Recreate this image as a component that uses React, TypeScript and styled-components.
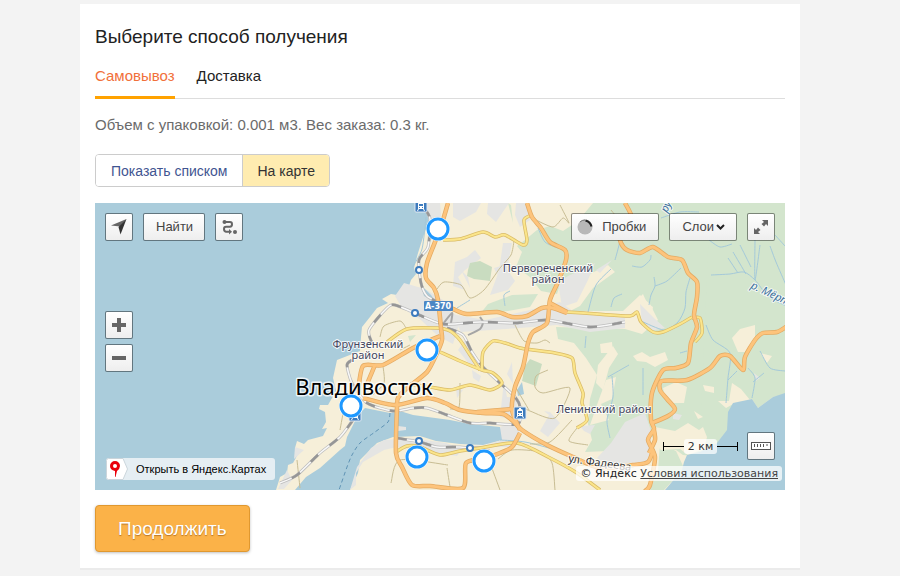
import React from "react";
import styled, { createGlobalStyle } from "styled-components";

const GlobalStyle = createGlobalStyle`
  *, *::before, *::after { box-sizing: border-box; }
  body {
    margin: 0;
    padding: 4px 20px 4px 0;
    background: #f3f3f3;
    color: #222;
    font-family: "Liberation Sans", Arial, sans-serif;
  }
`;

const Card = styled.main`
  max-width: 720px;
  margin: 0 auto;
  padding: 21px 15px 16px;
  background: #fff;
  box-shadow: 0 2px 0 #ebebeb;
`;

const Title = styled.h1`
  margin: 0 0 15px;
  font-size: 19px;
  line-height: 24px;
  font-weight: 400;
`;

const Tabs = styled.nav`
  display: flex;
  gap: 22px;
  border-bottom: 1px solid #ddd;
`;

const Tab = styled.button<{ $active?: boolean }>`
  height: 35px;
  margin-bottom: -1px;
  padding: 0 0 8px;
  border: 0;
  border-bottom: 3px solid ${(p) => (p.$active ? "#ffa200" : "transparent")};
  background: none;
  color: ${(p) => (p.$active ? "#f1703a" : "#222")};
  font: 15px/20px "Liberation Sans", Arial, sans-serif;
  cursor: pointer;
`;

const Summary = styled.p`
  margin: 16px 0 19px;
  color: #6b6b6b;
  font-size: 15px;
  line-height: 20px;
`;

const Segments = styled.div`
  display: inline-flex;
  height: 33px;
  border: 1px solid #ccc;
  border-radius: 4px;
  overflow: hidden;
`;

const Segment = styled.button<{ $active?: boolean }>`
  padding: 0 14px 0 15px;
  border: 0;
  background: ${(p) => (p.$active ? "#ffecb0" : "#fff")};
  color: ${(p) => (p.$active ? "#333" : "#3f5591")};
  font: 14px/20px "Liberation Sans", Arial, sans-serif;
  cursor: pointer;
  & + & { border-left: 1px solid #ccc; }
`;

const MapPanel = styled.section`
  display: grid;
  height: 287px;
  margin: 16px 0 15px;
  overflow: hidden;
  background: #aaccdb;
  & > * { grid-area: 1 / 1; min-width: 0; min-height: 0; }
`;

const MapCanvas = styled.svg`
  display: block;
  width: 100%;
  height: 287px;
`;

const Controls = styled.div`
  display: flex;
  flex-direction: column;
  justify-content: space-between;
  padding: 10px 10px 9px;
`;

const Row = styled.div`
  display: flex;
  justify-content: space-between;
  align-items: flex-end;
`;

const Group = styled.div<{ $gap?: number }>`
  display: flex;
  align-items: center;
  gap: ${(p) => p.$gap ?? 10}px;
`;

const ZoomGroup = styled.div`
  display: grid;
  gap: 5px;
  justify-content: start;
  margin-top: 10px;
`;

const MapButton = styled.button`
  display: flex;
  align-items: center;
  justify-content: center;
  gap: 2px;
  min-width: 28px;
  height: 28px;
  padding: 0;
  border: 1px solid rgba(0, 0, 0, 0.42);
  border-radius: 2px;
  background: linear-gradient(#fff, #eee);
  background-clip: padding-box;
  color: #444;
  font: 13px/20px "Liberation Sans", Arial, sans-serif;
  cursor: pointer;
  svg { flex: none; display: block; }
`;

const TextButton = styled(MapButton)`
  padding: 0 11px 0 12px;
`;

const TrafficButton = styled(MapButton)`
  gap: 9px;
  padding: 0 12px 0 5px;
`;

const OpenLink = styled.a`
  display: flex;
  align-items: center;
  gap: 8px;
  height: 22px;
  margin: 0 0 1px 1px;
  padding-right: 9px;
  border-radius: 3px;
  background: #e5eef3;
  color: #000;
  font-size: 11px;
  line-height: 16px;
  text-decoration: none;
`;

const BottomRight = styled.div`
  display: grid;
  justify-items: end;
  gap: 6px;
`;

const Copyright = styled.p`
  margin: 0 -7px 0 0;
  padding: 0 4px;
  border-radius: 3px;
  background: rgba(255, 255, 255, 0.72);
  color: #222;
  font: 11px/15px "DejaVu Sans", Verdana, sans-serif;
  a { color: #444; }
`;

const Scale = styled.div`
  display: flex;
  align-items: center;
  width: 75px;
  height: 9px;
  border: solid #000;
  border-width: 0 1px;
  color: #333;
  font: 11px/15px "DejaVu Sans", Verdana, sans-serif;
  white-space: nowrap;
  &::before, &::after { content: ""; flex: 1; height: 1px; background: #000; }
  span { padding: 0 4px; border-radius: 3px; background: rgba(255, 255, 255, 0.72); }
`;

const Submit = styled.button`
  display: block;
  height: 47px;
  padding: 0 22px;
  border: 1px solid #e0982f;
  border-radius: 4px;
  background: #fbb248;
  box-shadow: 0 1px 3px rgba(0, 0, 0, 0.25);
  color: #fff;
  font: 19px/24px "Liberation Sans", Arial, sans-serif;
  text-shadow: 0 1px 1px rgba(120, 60, 0, 0.5);
  cursor: pointer;
`;

type Line = number[];

/* Builds a smooth open curve through a flat list of x, y pairs. */
function curve(p: Line): string {
  const n = p.length / 2;
  const at = (i: number) => {
    const k = Math.max(0, Math.min(n - 1, i));
    return [p[k * 2], p[k * 2 + 1]];
  };
  let d = `M${p[0]} ${p[1]}`;
  for (let i = 0; i < n - 1; i++) {
    const [a, b, c, e] = [at(i - 1), at(i), at(i + 1), at(i + 2)];
    const t = 8;
    d += `C${b[0] + (c[0] - a[0]) / t} ${b[1] + (c[1] - a[1]) / t} ${c[0] - (e[0] - b[0]) / t} ${c[1] - (e[1] - b[1]) / t} ${c[0]} ${c[1]}`;
  }
  return d;
}

const highways: Line[] = [
  [448, 203, 443, 220, 435, 242, 427, 263, 426, 278, 434, 288, 438, 300, 441, 328, 442, 340, 437, 353, 427, 372, 407, 388, 398, 398, 397, 407, 396, 453, 402, 467, 412, 485, 430, 486, 463, 488, 466, 463, 483, 459, 500, 453, 512, 447, 520, 433],
  [363, 398, 395, 405, 427, 398, 445, 403, 460, 410, 483, 413, 503, 414, 513, 421, 522, 430, 547, 445, 573, 457, 600, 468, 633, 465, 648, 462, 653, 450],
  [477, 412, 512, 409],
  [527, 203, 532, 217, 541, 228, 550, 242, 565, 250, 566, 260, 558, 282, 550, 300, 547, 323, 533, 332, 528, 343, 523, 367, 515, 387, 512, 410, 520, 430],
  [438, 304, 453, 309, 467, 314, 497, 312, 512, 317, 527, 316, 542, 308, 553, 308, 567, 313],
  [550, 303, 567, 312],
  [625, 203, 632, 219, 620, 234, 621, 243, 627, 250, 640, 253, 653, 247, 668, 257, 682, 260, 688, 273, 697, 282, 697, 297, 694, 315, 697, 327, 691, 343, 688, 363, 676, 368, 663, 370, 652, 393, 651, 420, 654, 429, 648, 440, 655, 457, 650, 485, 645, 491],
  [652, 423, 668, 416, 675, 409, 667, 399, 660, 390, 662, 381, 687, 380, 710, 368, 720, 356, 730, 356, 743, 370, 745, 357, 755, 340, 763, 333, 777, 332, 786, 327],
  [358, 393, 363, 366, 383, 365, 413, 348, 440, 336],
  [367, 384, 375, 365],
  [654, 430, 655, 440, 649, 453],
];

const avenues: Line[] = [
  [443, 240, 460, 239, 483, 232, 495, 237, 505, 235, 523, 245, 527, 240, 524, 220, 532, 215],
  [387, 342, 407, 329, 437, 328, 450, 331, 460, 340, 470, 355, 480, 370],
  [440, 352, 460, 361, 482, 370, 493, 373, 502, 383, 490, 390, 470, 385, 450, 390, 430, 387, 410, 384],
  [482, 370, 483, 352, 493, 341, 505, 343, 520, 348, 533, 350, 555, 353, 572, 358, 575, 373, 583, 393, 582, 403, 587, 420, 577, 428],
  [396, 452, 407, 446, 420, 447, 440, 455, 460, 451, 480, 448, 517, 443, 550, 458, 577, 473, 600, 490],
  [567, 312, 597, 314, 630, 316, 637, 312, 641, 322, 653, 332, 663, 332, 680, 324, 692, 317],
  [692, 318, 700, 318, 702, 333, 695, 342],
];

const railways: Line[] = [
  [424, 208, 430, 219, 428, 247, 419, 260, 421, 283, 427, 296, 440, 303],
  [373, 345, 369, 330, 387, 308, 395, 305, 415, 313, 443, 324, 480, 322, 517, 323, 547, 320, 590, 327, 625, 322],
  [447, 328, 463, 335, 472, 352, 483, 367, 500, 383, 515, 397, 520, 407, 518, 424, 490, 423, 470, 423, 447, 415, 427, 408, 413, 408, 393, 411, 367, 403, 352, 383, 347, 365, 352, 360],
  [353, 420, 340, 437, 320, 453, 297, 475, 280, 483],
  [397, 438, 420, 442, 437, 447, 460, 447, 470, 448, 490, 448],
];

const sidings: Line[] = [
  [443, 324, 452, 313, 451, 323],
  [480, 317, 483, 322, 480, 329, 468, 335],
];

const lanes: Line[] = [
  [380, 337, 384, 326, 400, 321, 406, 328],
  [437, 289, 444, 282, 461, 285, 470, 298, 484, 290, 500, 268, 511, 255, 514, 241],
  [534, 219, 553, 227, 563, 218, 569, 223, 560, 205],
  [383, 366, 384, 383, 373, 395],
  [340, 430, 344, 408],
  [548, 370, 536, 376, 535, 387, 543, 393, 570, 388, 555, 418, 530, 411, 519, 405],
  [577, 428, 569, 441, 588, 445],
  [450, 409, 459, 407, 460, 383],
  [391, 483, 400, 460, 448, 465],
  [490, 463, 500, 490],
  [498, 459, 512, 450, 540, 452, 552, 463, 555, 490],
  [516, 388, 529, 410],
  [410, 345, 400, 350],
  [515, 325, 524, 341, 537, 343, 545, 340, 550, 343],
  [450, 487, 447, 468],
  [611, 210, 615, 215],
  [572, 420, 550, 442, 530, 444],
  [297, 460, 300, 488],
];

const streams: Line[] = [
  [621, 215, 620, 240, 615, 260],
  [611, 269, 596, 285, 588, 312],
  [611, 307, 614, 298, 622, 294],
  [632, 266, 642, 267, 650, 260, 651, 255],
  [649, 305, 651, 295, 655, 286, 654, 277],
  [655, 286, 667, 281, 681, 268],
  [690, 278, 686, 292, 685, 308, 678, 322, 664, 330, 641, 321],
  [711, 275, 730, 274, 744, 272, 755, 280, 768, 296, 786, 306],
  [728, 258, 738, 273],
  [733, 252, 746, 274],
  [740, 245, 751, 267],
  [755, 240, 755, 280, 760, 245],
  [770, 246, 776, 262, 786, 285],
  [785, 246, 775, 235],
  [709, 240, 720, 247, 732, 244],
  [661, 218, 680, 212, 699, 212],
  [706, 325, 713, 340, 730, 353, 728, 378, 726, 403],
  [728, 380, 737, 371],
  [748, 368, 755, 378, 752, 398],
  [753, 382, 764, 373],
  [760, 351, 770, 368, 785, 371],
  [643, 368, 643, 395],
  [680, 353, 687, 351],
  [612, 376, 613, 397, 607, 420, 610, 438],
  [585, 348, 586, 336],
  [608, 377, 629, 365],
  [500, 440, 525, 442, 555, 450, 583, 463],
  [538, 228, 545, 242, 558, 248],
  [457, 308, 470, 300],
  [505, 306, 504, 295, 510, 291],
  [426, 217, 422, 249, 412, 268],
];

const forest = [
  "M593 203 578 221 563 231 550 226 537 230 525 240 517 246 522 252 516 267 530 277 541 291 557 294 562 279 586 276 608 265 615 272 593 288 580 306 570 311H623L640 295 650 304 658 320 642 334 625 329 556 327 558 339 574 343 586 358 597 375 590 399 588 424 592 440 585 452 608 451 618 442 628 425 640 420 655 441 662 450 676 450 683 455 696 456 714 449 728 430V203Z",
  "M710 203H785V395L773 397 758 408 752 399 733 403 730 425 717 443 700 440Z",
  "M480 314 488 304 512 295 538 294 530 307 508 311Z",
  "M508 203 513 223 511 205Z",
  "M637 445 645 445 650 452 641 456Z",
  "M660 444 676 451 684 468 664 490H650L658 470Z",
  "M408 336 416 335 410 342Z",
];

const clearings = [
  "M633 356 642 352 650 357 665 352 668 360 655 367 646 362 637 361Z",
  "M663 388 676 382 687 387 684 403 673 403 665 397Z",
  "M655 427 675 431 688 423 699 430 703 427 707 437 704 449 688 455 680 449 661 450 652 441Z",
  "M703 385 714 387 714 393 705 391Z",
  "M694 411 703 417 698 419Z",
  "M732 383 741 389 750 400 735 403 726 408 718 401 729 401Z",
  "M732 338 740 329 755 325 755 338 745 352 738 352Z",
  "M634 303 643 294 647 303 653 307 650 322 639 317Z",
  "M598 365 613 346 618 354 609 368 603 390 596 383Z",
  "M606 380 616 377 612 399 601 404 609 420 590 425 598 402Z",
  "M760 353 772 356 767 363Z",
  "M600 344 612 342 613 353 601 353Z",
];

const builtUp = [
  "M453 203 481 203 476 212 460 221 453 217Z",
  "M488 203H509L496 222 487 214Z",
  "M516 203H526L530 220 520 227 515 215Z",
  "M395 296 404 283 425 289 443 300 451 312 461 318 453 344 438 336 421 320 402 308Z",
  "M451 314 485 320 530 310 560 302 577 314 625 318V328L590 332 557 325 520 328 461 332Z",
  "M455 262 467 257 475 250 481 258 465 270 458 277 465 290 453 286Z",
  "M503 243 512 243 507 269 515 281 508 290 490 295 499 271Z",
  "M558 282 570 275 588 267 595 263 588 280 577 302 562 307Z",
  "M596 270 612 260 600 273Z",
  "M611 443 625 422 645 413 652 434 648 462 607 464 597 458Z",
  "M500 427 518 419 520 437 510 447 480 447 502 440Z",
  "M371 448 384 440 410 438 446 443 462 449 457 456 397 447 384 450 363 462 356 473 356 485 350 490 357 467Z",
  "M465 340 480 362 470 365 458 350Z",
  "M425 203 440 203 441 216 431 232Z",
  "M640 304 655 319 665 328 650 331 642 323Z",
  "M504 381 507 397 517 398 516 420 500 417Z",
  "M461 270 468 277 470 288Z",
  "M287 470 292 480 284 489 278 489Z",
  "M295 447 304 450 294 459Z",
  "M456 388 463 390 457 398Z",
  "M512 362 507 374 513 384Z",
  "M544 411 549 415 540 431 548 437 560 423 550 412Z",
  "M580 426 595 425 590 434 584 431Z",
  "M472 370 481 376 479 382 473 378Z",
  "M398 426 406 427 406 430 398 431Z",
  "M673 413 682 415 679 420 673 419Z",
  "M754 373 760 378 756 381Z",
  "M494 268 501 266 497 275Z",
];

const markers = [[438, 229], [427, 350], [351, 406], [417, 457], [484, 461]];
const stops = [[419, 270], [415, 313], [419, 441], [470, 448]];
const stations = [[421, 206], [520, 413], [355, 415]];

const MapLabel = styled.text<{ $size?: number; $halo?: number; $italic?: boolean }>`
  font-family: "Noto Sans", "Open Sans", sans-serif;
  font-size: ${(p) => p.$size ?? 11}px;
  font-style: ${(p) => (p.$italic ? "italic" : "normal")};
  paint-order: stroke;
  stroke: #fff;
  stroke-opacity: 0.8;
  stroke-width: ${(p) => p.$halo ?? 2}px;
  stroke-linejoin: round;
`;

function Strokes({ lines, color, width, dash }: { lines: Line[]; color: string; width: number; dash?: string }) {
  return (
    <g fill="none" stroke={color} strokeWidth={width} strokeDasharray={dash} strokeLinejoin="round">
      {lines.map((l, i) => <path key={i} d={curve(l)} />)}
    </g>
  );
}

function CityMap() {
  return (
    <MapCanvas viewBox="95 203 690 287" preserveAspectRatio="xMidYMid slice" role="img" aria-label="Карта Владивостока">
      <rect x="-905" y="3" width="2690" height="687" fill="#aaccdb" />
      <path
        fill="#f6efd9"
        d="M424 203 426 211 431 220 425 231 418 253 414 268 416 274 411 280 408 289 397 295 391 294 382 299 388 303 377 308 370 317 362 327 361 337 360 351 337 360 333 378 336 391 328 405 320 405 319 409 325 412 326 422 322 429 327 428 323 436 308 440 304 444 297 441 295 448 298 454 293 463 288 465 287 473 280 477 276 490H295L306 477 320 468 340 450 345 446 347 437 352 427 358 415 365 408 390 413 400 411 413 415 450 420 470 424 500 427 504 435 502 440 483 445 460 444 436 441 420 436 393 437 377 443 360 460 358 473 350 490H785V203Z"
      />
      <g fill="#d3e5cd">{forest.map((d) => <path key={d} d={d} />)}</g>
      <g fill="#f6efd9">{clearings.map((d) => <path key={d} d={d} />)}</g>
      <g fill="#e5e5e3">{builtUp.map((d) => <path key={d} d={d} />)}</g>
      <path fill="#c9dcc0" d="M468 270 470 263 480 261 492 267 490 281 474 279 467 276ZM525 366 530 359 542 364 536 386 522 381Z" />
      <path fill="#aaccdb" d="M785 393 773 397 758 408 752 399 733 403 728 412 727 430 717 443 700 452 687 455 684 462 682 470 665 490H785ZM421 285 431 295 436 302 424 296ZM517 390 522 382 524 394 518 396Z" />
      <Strokes lines={streams} color="#a4c9da" width={1} />
      <Strokes lines={lanes} color="#c8bd94" width={1} />
      <Strokes lines={[[390, 413, 388, 422, 375, 432, 360, 443, 352, 455, 347, 467, 339, 490]]} color="#5f93b5" width={1} dash="4 3" />
      <Strokes lines={sidings} color="#a5a5a5" width={2} />
      <Strokes lines={railways} color="#bdbdbd" width={3} />
      <Strokes lines={railways} color="#f8f8f8" width={1.5} />
      <Strokes lines={railways} color="#969696" width={2.5} dash="10 15" />
      <Strokes lines={avenues} color="#d9bb68" width={3.5} />
      <Strokes lines={avenues} color="#fbe58b" width={2} />
      <Strokes lines={highways} color="#e3aa62" width={4.5} />
      <Strokes lines={highways} color="#fdc47c" width={3} />

      {stops.map(([x, y]) => <circle key={x} cx={x} cy={y} r="3" fill="#fff" stroke="#3d7bbd" strokeWidth="2" />)}
      {stations.map(([x, y]) => (
        <g key={x} transform={`translate(${x} ${y})`}>
          <rect x="-6" y="-6" width="12" height="12" rx="1" fill="#3d7bbd" stroke="#dfe9f3" strokeWidth="1" />
          <path fill="#fff" fillRule="evenodd" d="M-1-5H1V-4Q3-4 3-2V3H-3V-2Q-3-4-1-4ZM-2-2V0H2V-2ZM-2 1V2H-1V1ZM1 1V2H2V1ZM-3 3H-2L-3 5H-4ZM2 3H3L4 5H3Z" />
        </g>
      ))}

      <rect x="424" y="301" width="29" height="10" rx="1" fill="#4b86c4" />
      <text x="438" y="309" textAnchor="middle" fill="#fff" fontFamily="DejaVu Sans, sans-serif" fontWeight="700" fontSize="8">А-370</text>

      <MapLabel x="548" y="272" textAnchor="middle" fill="#45475e">Первореченский</MapLabel>
      <MapLabel x="548" y="283" textAnchor="middle" fill="#45475e">район</MapLabel>
      <MapLabel x="368" y="348" textAnchor="middle" fill="#45475e">Фрунзенский</MapLabel>
      <MapLabel x="368" y="359" textAnchor="middle" fill="#45475e">район</MapLabel>
      <MapLabel x="604" y="413" textAnchor="middle" fill="#45475e">Ленинский район</MapLabel>
      <MapLabel $size={22} $halo={3} x="364" y="395" textAnchor="middle" fill="#000">Владивосток</MapLabel>
      <MapLabel $italic x="750" y="288" fill="#3d719d" transform="rotate(25 750 288)">р. Мёртвая</MapLabel>
      <MapLabel $italic x="667" y="213" fill="#3d719d" transform="rotate(-65 667 213)">руч.</MapLabel>
      <MapLabel x="568" y="462" fill="#333" transform="rotate(8 568 462)">ул. Фадеева</MapLabel>

      {markers.map(([x, y]) => (
        <g key={x}>
          <circle cx={x} cy={y} r="12" fill="#fff" />
          <circle cx={x} cy={y} r="10" fill="#fff" stroke="#1e98ff" strokeWidth="3" />
        </g>
      ))}
    </MapCanvas>
  );
}

const LocateIcon = () => (
  <svg width="16" height="16" viewBox="0 0 16 16" aria-hidden="true">
    <path fill="#666" d="M0 6.5 15.500 0 9 7.500Z" />
    <path fill="#333" d="M15.500 0 9.500 15.500 7.500 8Z" />
  </svg>
);

const RouteIcon = () => (
  <svg width="16" height="16" viewBox="0 0 16 16" aria-hidden="true">
    <path fill="none" stroke="#666" strokeWidth="2" d="M3 3H9Q11 3 11 5.300T9 7.700H5Q3 7.700 3 10T5 12.700H8" />
    <circle cx="3.500" cy="3" r="2" fill="#666" />
    <path fill="#666" d="M8 10 11 12.700 8 15.500Z" />
    <circle cx="14" cy="13" r="2" fill="#666" />
  </svg>
);

const ZoomIcon = ({ plus }: { plus?: boolean }) => (
  <svg width="14" height="14" viewBox="0 0 14 14" aria-hidden="true">
    <path fill="#666" d={plus ? "M5 0H9V5H14V9H9V14H5V9H0V5H5Z" : "M0 5H14V9H0Z"} />
  </svg>
);

const TrafficIcon = () => (
  <svg width="16" height="16" viewBox="0 0 16 16" aria-hidden="true">
    <circle cx="8" cy="8" r="7.500" fill="#b8b8b8" />
    <path fill="none" stroke="#222" strokeWidth="2" d="M8.500 1.500Q13.500 3 14.500 7.500" />
    <path fill="none" stroke="#777" strokeWidth="1" d="M3 3Q5 1 8 1" />
  </svg>
);

const ChevronIcon = () => (
  <svg width="9" height="6" viewBox="0 0 9 6" aria-hidden="true">
    <path fill="none" stroke="#222" strokeWidth="2" d="M1 1 4.500 4.500 8 1" />
  </svg>
);

const ExpandIcon = () => (
  <svg width="16" height="16" viewBox="0 0 16 16" aria-hidden="true">
    <path fill="#666" d="M9 1H15V7L13 5 11 7.500 8.500 5 11 3ZM1 15V9L3 11 5 8.500 7.500 11 5 13 7 15Z" />
  </svg>
);

const RulerIcon = () => (
  <svg width="20" height="8" viewBox="0 0 20 8" aria-hidden="true">
    <rect x="0.500" y="0.500" width="19" height="7" fill="#fff" stroke="#555" />
    <path stroke="#555" d="M3.500 2V5M6.500 2V5M9.500 2V5M12.500 2V5M16 2V4" />
  </svg>
);

const PinIcon = () => (
  <svg width="22" height="22" viewBox="0 0 22 22" aria-hidden="true">
    <path fill="#fff" stroke="#cbd5db" d="M2.500 0.500H17L21.500 11 17 21.500H2.500Q0.500 21.500 0.500 19.500V2.500Q0.500 0.500 2.500 0.500Z" />
    <path fill="#e9000b" fillRule="evenodd" d="M9 3A5 5 0 0 1 14 8Q14 10.500 11 13L9.500 19H9V13Q4 12 4 8A5 5 0 0 1 9 3ZM9 6A2 2 0 1 0 9 10 2 2 0 1 0 9 6Z" />
  </svg>
);

export default function App() {
  return (
    <>
      <GlobalStyle />
      <Card>
        <Title>Выберите способ получения</Title>
        <Tabs aria-label="Способ получения">
          <Tab type="button" $active aria-current="true">Самовывоз</Tab>
          <Tab type="button">Доставка</Tab>
        </Tabs>
        <Summary>Объем с упаковкой: 0.001 м3. Вес заказа: 0.3 кг.</Summary>
        <Segments>
          <Segment type="button">Показать списком</Segment>
          <Segment type="button" $active aria-pressed="true">На карте</Segment>
        </Segments>
        <MapPanel>
          <CityMap />
          <Controls>
            <Row>
              <Group>
                <MapButton type="button" aria-label="Моё местоположение"><LocateIcon /></MapButton>
                <TextButton type="button">Найти</TextButton>
                <MapButton type="button" aria-label="Маршрут"><RouteIcon /></MapButton>
              </Group>
              <Group>
                <TrafficButton type="button"><TrafficIcon />Пробки</TrafficButton>
                <TextButton type="button">Слои<ChevronIcon /></TextButton>
                <MapButton type="button" aria-label="На весь экран"><ExpandIcon /></MapButton>
              </Group>
            </Row>
            <ZoomGroup>
              <MapButton type="button" aria-label="Приблизить"><ZoomIcon plus /></MapButton>
              <MapButton type="button" aria-label="Отдалить"><ZoomIcon /></MapButton>
            </ZoomGroup>
            <Row>
              <OpenLink href="#maps"><PinIcon />Открыть в Яндекс.Картах</OpenLink>
              <BottomRight>
                <Group $gap={9}>
                  <Scale><span>2 км</span></Scale>
                  <MapButton type="button" aria-label="Измерить расстояние"><RulerIcon /></MapButton>
                </Group>
                <Copyright>© Яндекс <a href="#terms">Условия использования</a></Copyright>
              </BottomRight>
            </Row>
          </Controls>
        </MapPanel>
        <Submit type="submit">Продолжить</Submit>
      </Card>
    </>
  );
}
